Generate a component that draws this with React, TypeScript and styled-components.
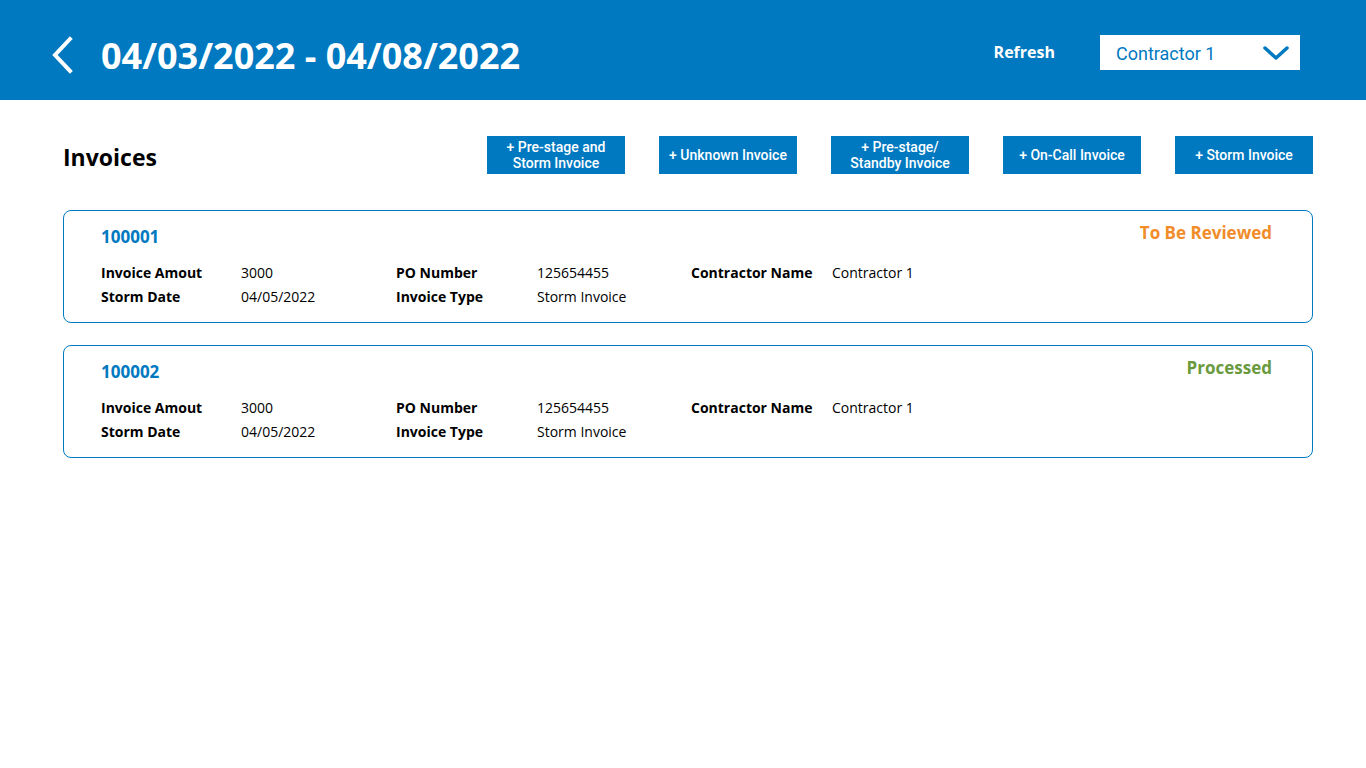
import React from "react";
import styled, { createGlobalStyle } from "styled-components";

const BLUE = "#0079c1";

const GlobalStyle = createGlobalStyle`
  html, body {
    margin: 0;
    padding: 0;
    background: #ffffff;
    font-family: "Open Sans", "Noto Sans", sans-serif;
  }
`;

const Header = styled.header`
  height: 100px;
  background: ${BLUE};
  display: flex;
  align-items: center;
  padding: 14px 66px 0 50px;
  box-sizing: border-box;
`;

const BackButton = styled.button`
  border: 0;
  background: none;
  padding: 0;
  margin: 0 27px 5px 0;
  display: flex;
  align-items: center;
  cursor: pointer;
`;

const Title = styled.h1`
  margin: 0;
  color: #ffffff;
  font-size: 36px;
  font-weight: 700;
  line-height: 1;
  padding-bottom: 2px;
`;

const HeaderRight = styled.div`
  margin-left: auto;
  display: flex;
  align-items: center;
  gap: 45px;
  margin-top: -10px;
`;

const RefreshLink = styled.span`
  color: #ffffff;
  font-size: 16px;
  font-weight: 700;
  cursor: pointer;
`;

const Select = styled.div`
  width: 200px;
  height: 35px;
  background: #ffffff;
  box-sizing: border-box;
  padding: 2px 10px 0 16px;
  display: flex;
  align-items: center;
  justify-content: space-between;
  color: ${BLUE};
  font-family: Roboto, "Liberation Sans", sans-serif;
  font-size: 18px;
`;

const Main = styled.main`
  padding: 36px 53px 0 63px;
`;

const Toolbar = styled.div`
  display: flex;
  align-items: center;
  margin-bottom: 36px;
`;

const SectionTitle = styled.h2`
  margin: 0;
  font-size: 23px;
  font-weight: 700;
  color: #000000;
  padding-top: 3px;
`;

const Actions = styled.div`
  margin-left: auto;
  display: flex;
  gap: 34px;
`;

const ActionButton = styled.button`
  width: 138px;
  height: 38px;
  border: 0;
  background: ${BLUE};
  color: #ffffff;
  font-family: Roboto, "Liberation Sans", sans-serif;
  font-weight: 500;
  font-size: 14px;
  line-height: 16px;
  padding: 0 2px;
  cursor: pointer;
`;

const CardList = styled.div`
  display: flex;
  flex-direction: column;
  gap: 22px;
`;

const Card = styled.div`
  border: 1px solid ${BLUE};
  border-radius: 8px;
  height: 113px;
  box-sizing: border-box;
  padding: 13px 40px 0 37px;
`;

const CardTop = styled.div`
  display: flex;
  justify-content: space-between;
  align-items: flex-start;
  height: 36px;
`;

const InvoiceId = styled.div`
  color: ${BLUE};
  font-size: 17px;
  font-weight: 700;
  margin-top: 1px;
`;

const Status = styled.div<{ $color: string }>`
  color: ${(p) => p.$color};
  font-size: 17px;
  font-weight: 700;
  margin-top: -3px;
`;

const Grid = styled.div`
  display: grid;
  grid-template-columns: 140px 155px 141px 154px 141px auto;
  grid-auto-rows: 24px;
  align-items: center;
  font-size: 14px;
  color: #000000;
`;

const Label = styled.span`
  font-weight: 700;
`;

const Value = styled.span`
  font-weight: 400;
`;

const ChevronLeft = () => (
  <svg width="24" height="38" viewBox="0 0 24 38">
    <path d="M20 3 L5 19 L20 35" fill="none" stroke="#fff" strokeWidth="4" strokeLinecap="square" />
  </svg>
);

const ChevronDown = () => (
  <svg width="28" height="16" viewBox="0 0 28 16">
    <path d="M3 3 L14 13 L25 3" fill="none" stroke={BLUE} strokeWidth="3.5" strokeLinecap="round" strokeLinejoin="round" />
  </svg>
);

type Invoice = {
  id: string;
  status: string;
  statusColor: string;
  amount: string;
  stormDate: string;
  po: string;
  type: string;
  contractor: string;
};

const invoices: Invoice[] = [
  {
    id: "100001",
    status: "To Be Reviewed",
    statusColor: "#f08c2a",
    amount: "3000",
    stormDate: "04/05/2022",
    po: "125654455",
    type: "Storm Invoice",
    contractor: "Contractor 1",
  },
  {
    id: "100002",
    status: "Processed",
    statusColor: "#6a9a3e",
    amount: "3000",
    stormDate: "04/05/2022",
    po: "125654455",
    type: "Storm Invoice",
    contractor: "Contractor 1",
  },
];

const actions = [
  ["+ Pre-stage and", "Storm Invoice"],
  ["+ Unknown Invoice"],
  ["+ Pre-stage/", "Standby Invoice"],
  ["+ On-Call Invoice"],
  ["+ Storm Invoice"],
];

function InvoiceCard({ inv }: { inv: Invoice }) {
  return (
    <Card>
      <CardTop>
        <InvoiceId>{inv.id}</InvoiceId>
        <Status $color={inv.statusColor}>{inv.status}</Status>
      </CardTop>
      <Grid>
        <Label>Invoice Amout</Label>
        <Value>{inv.amount}</Value>
        <Label>PO Number</Label>
        <Value>{inv.po}</Value>
        <Label>Contractor Name</Label>
        <Value>{inv.contractor}</Value>
        <Label>Storm Date</Label>
        <Value>{inv.stormDate}</Value>
        <Label>Invoice Type</Label>
        <Value>{inv.type}</Value>
      </Grid>
    </Card>
  );
}

export default function App() {
  return (
    <>
      <GlobalStyle />
      <Header>
        <BackButton aria-label="Back">
          <ChevronLeft />
        </BackButton>
        <Title>04/03/2022 - 04/08/2022</Title>
        <HeaderRight>
          <RefreshLink>Refresh</RefreshLink>
          <Select>
            <span>Contractor 1</span>
            <ChevronDown />
          </Select>
        </HeaderRight>
      </Header>
      <Main>
        <Toolbar>
          <SectionTitle>Invoices</SectionTitle>
          <Actions>
            {actions.map((lines) => (
              <ActionButton key={lines.join(" ")}>
                {lines.map((l, i) => (
                  <React.Fragment key={l}>
                    {i > 0 && <br />}
                    {l}
                  </React.Fragment>
                ))}
              </ActionButton>
            ))}
          </Actions>
        </Toolbar>
        <CardList>
          {invoices.map((inv) => (
            <InvoiceCard key={inv.id} inv={inv} />
          ))}
        </CardList>
      </Main>
    </>
  );
}
